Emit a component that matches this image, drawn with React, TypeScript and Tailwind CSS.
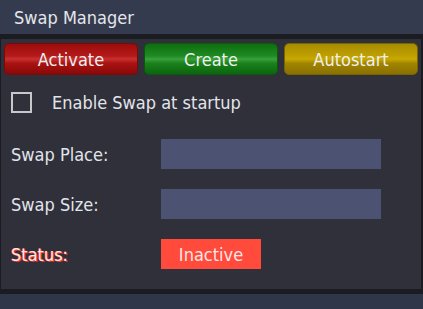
import React from 'react'

const btnBase =
  'w-[134px] h-[32px] rounded-[5px] flex items-center justify-center text-[18px] text-[#eef0ee] border'

export default function App() {
  return (
    <div className="w-[423px] h-[309px] bg-[#2f3649] font-['DejaVu_Sans_Condensed','DejaVu_Sans',sans-serif] [font-stretch:condensed] overflow-hidden">
      {/* Title bar */}
      <div className="h-[34px] bg-[#343b4e] flex items-center px-[14px] text-[18px] text-[#e4e6ea]">
        Swap Manager
      </div>

      {/* Panel */}
      <div className="h-[260px] bg-[#2f3039] border-t-[5px] border-b-[5px] border-l border-r-2 border-[#1b1c22] flex flex-col">
        <div className="flex gap-[6px] px-[3px] pt-[4px]">
          <button className={`${btnBase} border-[#7a0a0a] bg-[linear-gradient(to_bottom,#9c0c0c_0%,#b41a1a_40%,#c93030_50%,#a81212_65%,#8a0808_100%)]`}>
            Activate
          </button>
          <button className={`${btnBase} border-[#0a5a0a] bg-[linear-gradient(to_bottom,#0e6e10_0%,#1f8a22_40%,#3aa03c_50%,#1a801c_65%,#0b650d_100%)]`}>
            Create
          </button>
          <button className={`${btnBase} border-[#7a6400] bg-[linear-gradient(to_bottom,#a88c00_0%,#bfa000_40%,#c8aa00_50%,#a08400_65%,#8a7000_100%)]`}>
            Autostart
          </button>
        </div>

        <label className="flex items-center mt-[17px] pl-[10px] h-[20px]">
          <span className="w-[21px] h-[21px] border-2 border-[#c8c8cc]" />
          <span className="ml-[20px] text-[18px] text-[#e2e4ec]">Enable Swap at startup</span>
        </label>

        <div className="flex items-center mt-[27px] pl-[10px] h-[30px]">
          <span className="w-[150px] text-[18px] text-[#e2e4ec]">Swap Place:</span>
          <div className="w-[220px] h-[30px] bg-[#4b5272]" />
        </div>

        <div className="flex items-center mt-[20px] pl-[10px] h-[30px]">
          <span className="w-[150px] text-[18px] text-[#e2e4ec]">Swap Size:</span>
          <div className="w-[220px] h-[30px] bg-[#4b5272]" />
        </div>

        <div className="flex items-center mt-[20px] pl-[10px] h-[30px]">
          <span className="w-[150px] text-[18px] text-[#ffe6e2] [text-shadow:1px_1px_0_#e8362c,-1px_0_0_#e8362c]">
            Status:
          </span>
          <div className="w-[100px] h-[30px] bg-[#ff4a3c] flex items-center justify-center text-[18px] text-[#fbe6e4]">
            Inactive
          </div>
        </div>
      </div>
    </div>
  )
}
